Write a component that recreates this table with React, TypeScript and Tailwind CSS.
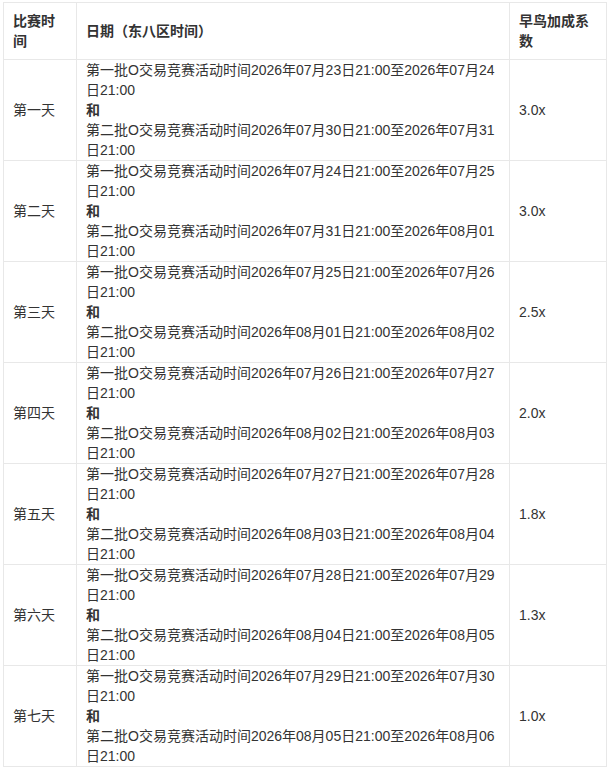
const rows = [
  { day: '第一天', a: ['2026年07月23日21:00', '2026年07月24日21:00'], b: ['2026年07月30日21:00', '2026年07月31日21:00'], rate: '3.0x' },
  { day: '第二天', a: ['2026年07月24日21:00', '2026年07月25日21:00'], b: ['2026年07月31日21:00', '2026年08月01日21:00'], rate: '3.0x' },
  { day: '第三天', a: ['2026年07月25日21:00', '2026年07月26日21:00'], b: ['2026年08月01日21:00', '2026年08月02日21:00'], rate: '2.5x' },
  { day: '第四天', a: ['2026年07月26日21:00', '2026年07月27日21:00'], b: ['2026年08月02日21:00', '2026年08月03日21:00'], rate: '2.0x' },
  { day: '第五天', a: ['2026年07月27日21:00', '2026年07月28日21:00'], b: ['2026年08月03日21:00', '2026年08月04日21:00'], rate: '1.8x' },
  { day: '第六天', a: ['2026年07月28日21:00', '2026年07月29日21:00'], b: ['2026年08月04日21:00', '2026年08月05日21:00'], rate: '1.3x' },
  { day: '第七天', a: ['2026年07月29日21:00', '2026年07月30日21:00'], b: ['2026年08月05日21:00', '2026年08月06日21:00'], rate: '1.0x' },
];

export default function App() {
  return (
    <div
      className="min-h-[772px] bg-white pl-[3px] pt-[2px] text-[14px] leading-5 text-[#333]"
      style={{ fontFamily: '"Liberation Sans", "Noto Sans CJK SC", sans-serif' }}
    >
      <table className="table-fixed border-collapse w-[603px]">
        <colgroup>
          <col className="w-[73px]" />
          <col className="w-[433px]" />
          <col className="w-[97px]" />
        </colgroup>
        <thead>
          <tr className="font-bold text-left">
            <th className="border border-[#e8e8e8] px-[9px] py-2 align-middle">比赛时间</th>
            <th className="border border-[#e8e8e8] px-[9px] py-2 align-middle">日期（东八区时间）</th>
            <th className="border border-[#e8e8e8] px-[9px] py-2 align-middle">早鸟加成系数</th>
          </tr>
        </thead>
        <tbody>
          {rows.map((r) => (
            <tr key={r.day}>
              <td className="border border-[#e8e8e8] px-[9px] py-0 align-middle">{r.day}</td>
              <td className="border border-[#e8e8e8] px-[9px] py-0 align-middle">
                <div>第一批O交易竞赛活动时间{r.a[0]}至{r.a[1]}</div>
                <div className="font-bold">和</div>
                <div>第二批O交易竞赛活动时间{r.b[0]}至{r.b[1]}</div>
              </td>
              <td className="border border-[#e8e8e8] px-[9px] py-0 align-middle">{r.rate}</td>
            </tr>
          ))}
        </tbody>
      </table>
    </div>
  );
}
